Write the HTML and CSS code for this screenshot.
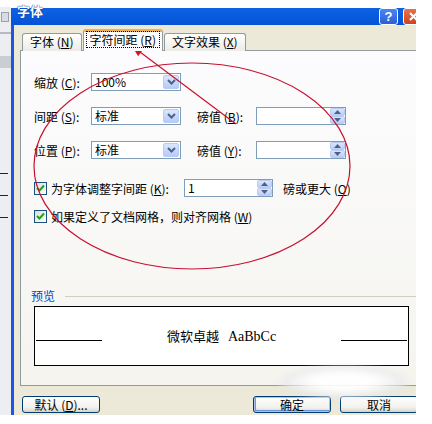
FILE: index.html
```html
<!DOCTYPE html>
<html>
<head>
  <title>字体</title>
  <link rel="stylesheet" href="styles.css">
</head>
<body>
  <div class="screen">
    <div class="desk">
      <span class="desk-icon"></span>
      <span class="desk-rule"></span>
      <span class="desk-block"></span>
      <span class="desk-tick t1"></span>
      <span class="desk-tick"></span>
      <span class="desk-tick"></span>
    </div>

    <div class="dialog-clip">
      <div class="dialog">
        <div class="titlebar">
          <span class="title">字体</span>
          <span class="tb-btn help">?</span>
          <span class="tb-btn close">
            <svg width="9" height="9" viewBox="0 0 9 9"><path d="M1 1 L8 8 M8 1 L1 8" stroke="#fff" stroke-width="2"/></svg>
          </span>
        </div>

        <div class="body">
          <div class="tabs">
            <div class="tab">字体 (<u>N</u>)</div>
            <div class="tab active"><span class="focus">字符间距 (<u>R</u>)</span></div>
            <div class="tab">文字效果 (<u>X</u>)</div>
          </div>

          <div class="panel">
            <div class="form">
              <label class="lbl">缩放 (<u>C</u>):</label>
              <div class="combo"><span class="val">100%</span><span class="drop"><svg width="9" height="6" viewBox="0 0 9 6"><path d="M1 1 L4.5 4.5 L8 1" stroke="#4d6185" stroke-width="2" fill="none"/></svg></span></div>
              <span></span><span></span>

              <label class="lbl">间距 (<u>S</u>):</label>
              <div class="combo"><span class="val">标准</span><span class="drop"><svg width="9" height="6" viewBox="0 0 9 6"><path d="M1 1 L4.5 4.5 L8 1" stroke="#4d6185" stroke-width="2" fill="none"/></svg></span></div>
              <label class="lbl lbl2">磅值 (<u>B</u>):</label>
              <div class="spin"><span class="val"></span><span class="arrows"><span class="arr"><svg width="7" height="4" viewBox="0 0 7 4"><path d="M0 4 L3.5 0 L7 4Z" fill="#4d6185"/></svg></span><span class="arr"><svg width="7" height="4" viewBox="0 0 7 4"><path d="M0 0 L3.5 4 L7 0Z" fill="#4d6185"/></svg></span></span></div>

              <label class="lbl">位置 (<u>P</u>):</label>
              <div class="combo"><span class="val">标准</span><span class="drop"><svg width="9" height="6" viewBox="0 0 9 6"><path d="M1 1 L4.5 4.5 L8 1" stroke="#4d6185" stroke-width="2" fill="none"/></svg></span></div>
              <label class="lbl lbl2">磅值 (<u>Y</u>):</label>
              <div class="spin"><span class="val"></span><span class="arrows"><span class="arr"><svg width="7" height="4" viewBox="0 0 7 4"><path d="M0 4 L3.5 0 L7 4Z" fill="#4d6185"/></svg></span><span class="arr"><svg width="7" height="4" viewBox="0 0 7 4"><path d="M0 0 L3.5 4 L7 0Z" fill="#4d6185"/></svg></span></span></div>
            </div>

            <div class="check-row kern">
              <label class="check-lbl"><span class="box"><svg width="9" height="9" viewBox="0 0 9 9"><path d="M1 4 L3.5 6.5 L8 1.5" stroke="#21a121" stroke-width="2" fill="none"/></svg></span>为字体调整字间距 (<u>K</u>):</label>
              <div class="spin spin-k"><span class="val">1</span><span class="arrows"><span class="arr"><svg width="7" height="4" viewBox="0 0 7 4"><path d="M0 4 L3.5 0 L7 4Z" fill="#4d6185"/></svg></span><span class="arr"><svg width="7" height="4" viewBox="0 0 7 4"><path d="M0 0 L3.5 4 L7 0Z" fill="#4d6185"/></svg></span></span></div>
              <span class="after">磅或更大 (<u>O</u>)</span>
            </div>

            <div class="check-row grid-snap">
              <label class="check-lbl"><span class="box"><svg width="9" height="9" viewBox="0 0 9 9"><path d="M1 4 L3.5 6.5 L8 1.5" stroke="#21a121" stroke-width="2" fill="none"/></svg></span>如果定义了文档网格，则对齐网格 (<u>W</u>)</label>
            </div>

            <div class="legend"><span class="legend-text">预览</span><span class="legend-line"></span></div>
            <div class="preview">
              <span class="pv-line"></span>
              <span class="pv-text">微软卓越<span class="latin">AaBbCc</span></span>
              <span class="pv-line"></span>
            </div>
          </div>

          <div class="buttons">
            <button class="btn">默认 (<u>D</u>)...</button>
            <button class="btn btn-ok">确定</button>
            <button class="btn btn-cancel">取消</button>
          </div>
        </div>
      </div>
    </div>

    <div class="smudge"></div>

    <svg class="annot" width="432" height="424" viewBox="0 0 432 424">
      <ellipse cx="192" cy="166" rx="158" ry="103" fill="none" stroke="#c8102e" stroke-width="1.2"/>
      <line x1="236" y1="124" x2="140" y2="52" stroke="#c8102e" stroke-width="1.2"/>
      <polygon points="132,46 143.5,49 138.1,56.2" fill="#e0101e"/>
    </svg>
  </div>
</body>
</html>
```

FILE: styles.css
```css
/* XP font dialog */
* {
  box-sizing: border-box;
}

body {
  margin: 0;
  background-color: #fff;
  font-family: "Noto Sans CJK SC", sans-serif;
  font-size: 12px;
  color: #000;
}

u {
  text-decoration: underline;
}

.screen {
  position: relative;
  width: 432px;
  height: 424px;
  overflow: hidden;
  display: flex;
  align-items: flex-start;
}

/* window behind the dialog */
.desk {
  width: 11px;
  height: 415px;
  background: linear-gradient(#fff 0 7px, #eceef2 7px);
  display: flex;
  flex-direction: column;
}

.desk-icon {
  margin: 12px 0 0 1px;
  width: 8px;
  height: 10px;
  border: 1px solid #9aa2ae;
  background-color: #d8dce2;
}

.desk-rule {
  margin-top: 10px;
  height: 2px;
  background-color: #b3bac6;
}

.desk-block {
  margin-top: 22px;
  height: 12px;
  background-color: #c9cdd4;
}

.desk-tick {
  margin-top: 21px;
  width: 8px;
  height: 1px;
  background-color: #222;
}

.desk-tick.t1 {
  margin-top: 105px;
}

.dialog-clip {
  width: 405px;
  height: 415px;
  overflow: hidden;
}

.dialog {
  width: 420px;
  height: 415px;
  display: flex;
  flex-direction: column;
}

.titlebar {
  height: 25px;
  flex-shrink: 0;
  display: flex;
  align-items: flex-start;
  padding: 0 7px 0 6px;
  background: linear-gradient(#fff 0 8px, #0d62e4 8px, #0453d4 25px);
}

.title {
  margin-top: 3px;
  font-weight: bold;
  font-size: 13px;
  line-height: 16px;
  color: #fff;
  text-shadow: 0 0 1px #0a3a9a, 0 0 1px #0a3a9a;
}

.tb-btn {
  margin-top: 8px;
  height: 17px;
  border: 1px solid #fff;
  border-radius: 3px;
  display: flex;
  align-items: center;
  justify-content: center;
  color: #fff;
  font-weight: bold;
  font-size: 13px;
  font-family: "Liberation Sans", sans-serif;
}

.help {
  margin-left: auto;
  width: 19px;
  background: linear-gradient(#4a86f2, #2a5fd8);
}

.close {
  margin-left: 5px;
  width: 21px;
  background: linear-gradient(#e8714c, #cc4420);
}

.body {
  flex: 1;
  background-color: #ece9d8;
  border-left: 3px solid #1d57e0;
  padding-left: 6px;
  display: flex;
  flex-direction: column;
}

/* tabs */
.tabs {
  margin-top: 5px;
  height: 21px;
  display: flex;
  align-items: flex-end;
  padding-left: 2px;
  position: relative;
  z-index: 1;
  margin-bottom: -1px;
}

.tab {
  height: 18px;
  padding: 0 7px;
  border: 1px solid #919b9c;
  border-bottom: none;
  border-radius: 3px 3px 0 0;
  background: linear-gradient(#fff, #ecebe6);
  line-height: 16px;
  white-space: nowrap;
}

.tab.active {
  height: 22px;
  margin: 0 1px;
  padding: 0 3px;
  border-top: 3px solid #f5b040;
  background-color: #fcfcfe;
  background-image: none;
  line-height: 16px;
}

.focus {
  display: inline-block;
  padding: 0 3px;
  outline: 1px dotted #000;
  line-height: 15px;
}

/* page */
.panel {
  height: 336px;
  border: 1px solid #919b9c;
  background: linear-gradient(#fcfcfe, #f5f4ef);
  padding: 22px 0 0 13px;
}

.form {
  display: grid;
  grid-template-columns: 57px 90px 75px 90px;
  grid-auto-rows: 18px;
  row-gap: 16px;
  align-items: center;
}

.lbl {
  white-space: nowrap;
}

.lbl2 {
  padding-left: 16px;
}

.combo,
.spin {
  height: 18px;
  border: 1px solid #7f9db9;
  background-color: #fff;
  display: flex;
  align-items: center;
}

.val {
  flex: 1;
  padding-left: 3px;
  line-height: 16px;
}

.drop {
  width: 16px;
  height: 14px;
  margin-right: 1px;
  border: 1px solid #b9cbf3;
  border-radius: 2px;
  background: linear-gradient(#dbe6fd, #b6cbf8);
  display: flex;
  align-items: center;
  justify-content: center;
}

.arrows {
  width: 15px;
  height: 16px;
  display: flex;
  flex-direction: column;
}

.arr {
  flex: 1;
  border: 1px solid #b9cbf3;
  border-radius: 2px;
  background: linear-gradient(#dbe6fd, #b9cdf8);
  display: flex;
  align-items: center;
  justify-content: center;
}

.check-row {
  display: flex;
  align-items: center;
}

.kern {
  margin-top: 20px;
  height: 18px;
}

.grid-snap {
  margin-top: 12px;
  height: 14px;
}

.check-lbl {
  display: flex;
  align-items: center;
  white-space: nowrap;
}

.kern .check-lbl {
  width: 150px;
}

.box {
  width: 13px;
  height: 13px;
  margin-right: 4px;
  border: 1px solid #1c5180;
  background: linear-gradient(135deg, #dcdcd7, #fff);
  display: flex;
  align-items: center;
  justify-content: center;
}

.spin-k {
  width: 89px;
}

.after {
  margin-left: 10px;
  white-space: nowrap;
}

.legend {
  margin: 67px 0 0 -3px;
  height: 12px;
  display: flex;
  align-items: center;
}

.legend-text {
  color: #0046d5;
  line-height: 12px;
}

.legend-line {
  flex: 1;
  margin-left: 10px;
  height: 1px;
  background-color: #d0d0bf;
}

.preview {
  margin-top: 4px;
  width: 375px;
  height: 60px;
  border: 1px solid #000;
  background-color: #fff;
  padding: 0 1px;
  display: flex;
  align-items: flex-start;
}

.pv-line {
  width: 66px;
  height: 34px;
  border-bottom: 1px solid #000;
}

.pv-text {
  flex: 1;
  text-align: center;
  font-size: 13px;
  line-height: 16px;
  margin-top: 21px;
}

.latin {
  margin-left: 9px;
  font-family: "Liberation Serif", serif;
  font-size: 14px;
}

/* bottom buttons */
.buttons {
  margin-top: 10px;
  display: flex;
  padding: 0 13px 0 2px;
}

.btn {
  width: 78px;
  height: 17px;
  padding: 0;
  border: 1px solid #003c74;
  border-radius: 3px;
  background: linear-gradient(#fff, #f2f1ec 70%, #d8d3c7);
  font-family: "Noto Sans CJK SC", sans-serif;
  font-size: 12px;
  line-height: 14px;
  color: #000;
}

.btn-ok {
  margin-left: auto;
  box-shadow: inset 0 0 0 1px #a9c4f0, inset 1px -1px 0 1px #6f95dc;
}

.btn-cancel {
  margin-left: 9px;
}

/* overlays */
.smudge {
  position: absolute;
  left: 276px;
  top: 364px;
  width: 136px;
  height: 36px;
  border-radius: 50%;
  background: radial-gradient(ellipse, rgba(255, 255, 255, 0.9) 30%, rgba(230, 232, 236, 0.6) 60%, rgba(255, 255, 255, 0) 72%);
  filter: blur(2px);
}

.annot {
  position: absolute;
  left: 0;
  top: 0;
  pointer-events: none;
}
```
